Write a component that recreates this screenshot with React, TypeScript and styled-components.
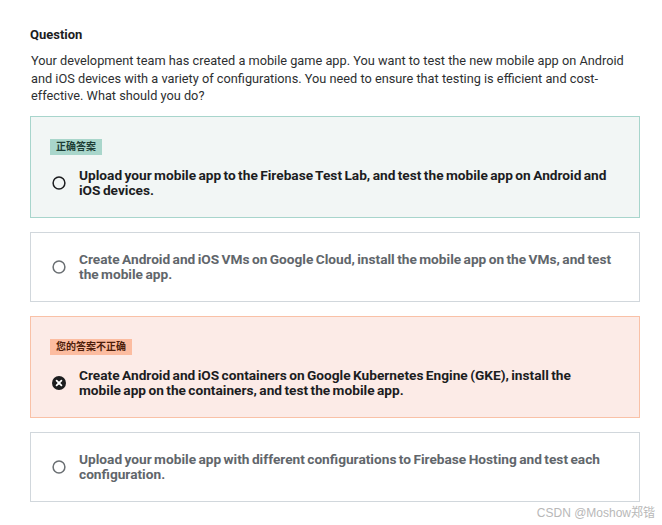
import React from 'react';
import styled, { createGlobalStyle } from 'styled-components';

const GlobalStyle = createGlobalStyle`
  html, body {
    margin: 0;
    padding: 0;
    background: #ffffff;
  }
  body {
    font-family: Roboto, "Noto Sans CJK SC", sans-serif;
    color: #1c1d1f;
  }
`;

type Status = 'correct' | 'wrong' | 'none';

interface IOption {
    id: number;
    text: string;
    status: Status;
    chosen?: boolean;
}

const options: IOption[] = [
    {
        id: 1,
        text: 'Upload your mobile app to the Firebase Test Lab, and test the mobile app on Android and iOS devices.',
        status: 'correct',
    },
    {
        id: 2,
        text: 'Create Android and iOS VMs on Google Cloud, install the mobile app on the VMs, and test the mobile app.',
        status: 'none',
    },
    {
        id: 3,
        text: 'Create Android and iOS containers on Google Kubernetes Engine (GKE), install the mobile app on the containers, and test the mobile app.',
        status: 'wrong',
        chosen: true,
    },
    {
        id: 4,
        text: 'Upload your mobile app with different configurations to Firebase Hosting and test each configuration.',
        status: 'none',
    },
];

const Radio = ({ chosen, dark }: { chosen?: boolean; dark: boolean }) =>
    chosen ? (
        <svg width="14" height="14" viewBox="0 0 14 14">
            <circle cx="7" cy="7" r="7" fill="#1c1d1f" />
            <path d="M4.6 4.6 L9.4 9.4 M9.4 4.6 L4.6 9.4" stroke="#fff" strokeWidth="1.8" strokeLinecap="round" />
        </svg>
    ) : (
        <svg width="14" height="14" viewBox="0 0 14 14">
            <circle cx="7" cy="7" r="5.9" fill="none" stroke={dark ? '#1c1d1f' : '#6a6f73'} strokeWidth="1.5" />
        </svg>
    );

const App = () => (
    <>
        <GlobalStyle />
        <Page>
            <Title>Question</Title>
            <Prompt>
                Your development team has created a mobile game app. You want to test the new mobile app on Android
                and iOS devices with a variety of configurations. You need to ensure that testing is efficient and
                cost-effective. What should you do?
            </Prompt>
            <List>
                {options.map((opt) => (
                    <Card key={opt.id} status={opt.status}>
                        {opt.status !== 'none' && (
                            <Badge status={opt.status}>
                                {opt.status === 'correct' ? '正确答案' : '您的答案不正确'}
                            </Badge>
                        )}
                        <Row>
                            <RadioBox>
                                <Radio chosen={opt.chosen} dark={opt.status !== 'none'} />
                            </RadioBox>
                            <OptionText muted={opt.status === 'none'}>{opt.text}</OptionText>
                        </Row>
                    </Card>
                ))}
            </List>
            <Watermark>CSDN @Moshow郑锴</Watermark>
        </Page>
    </>
);

export default App;

const Page = styled.div`
    position: relative;
    width: 662px;
    height: 525px;
    box-sizing: border-box;
    padding: 27px 22px 0 30px;
    overflow: hidden;
`;
const Title = styled.div`
    font-size: 13px;
    font-weight: 700;
    line-height: 16px;
    margin-bottom: 9px;
`;
const Prompt = styled.p`
    margin: 0 0 11px;
    font-size: 12.75px;
    line-height: 17.5px;
    padding-left: 1px;
    color: #2d2f31;
    hyphens: manual;
`;
const List = styled.div`
    display: flex;
    flex-direction: column;
    gap: 14px;
`;
const Card = styled.div<{ status: Status }>`
    box-sizing: border-box;
    padding: ${(p) => (p.status === 'none' ? '19px' : '22px')} 24px 19px 19px;
    display: flex;
    flex-direction: column;
    justify-content: center;
    gap: 13px;
    border: 1px solid
        ${(p) => (p.status === 'correct' ? '#a8d5cc' : p.status === 'wrong' ? '#f9c1a7' : '#d1d7dc')};
    background: ${(p) => (p.status === 'correct' ? '#f2f6f5' : p.status === 'wrong' ? '#fcebe7' : '#ffffff')};
`;
const Badge = styled.div<{ status: Status }>`
    align-self: flex-start;
    padding: 0 6px;
    height: 16px;
    line-height: 16px;
    font-size: 10px;
    font-weight: 700;
    color: ${(p) => (p.status === 'correct' ? '#1c3d35' : '#4d1d0a')};
    background: ${(p) => (p.status === 'correct' ? '#a9d6cb' : '#fcbca0')};
`;
const Row = styled.div`
    display: flex;
    align-items: center;
    gap: 13px;
`;
const RadioBox = styled.div`
    flex: 0 0 auto;
    width: 15px;
    display: flex;
    justify-content: center;
    padding-left: 1px;
`;
const OptionText = styled.div<{ muted: boolean }>`
    font-size: 13.7px;
    font-weight: 700;
    line-height: 15px;
    word-spacing: -1px;
    color: ${(p) => (p.muted ? '#61666b' : '#1c1d1f')};
`;
const Watermark = styled.div`
    position: absolute;
    right: 7px;
    bottom: 5px;
    font-size: 12px;
    color: #b8b8b8;
    font-family: "Liberation Sans", "Noto Sans CJK SC", sans-serif;
    background: rgba(255, 255, 255, 0.6);
`;
